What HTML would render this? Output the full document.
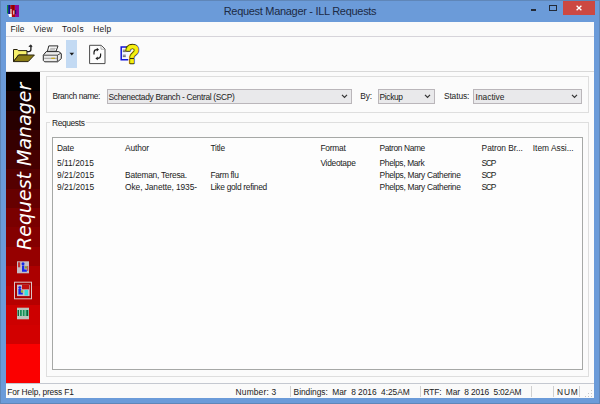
<!DOCTYPE html>
<html><head><meta charset="utf-8">
<title>Request Manager - ILL Requests</title>
<style>
*{box-sizing:border-box;margin:0;padding:0}
html,body{width:600px;height:404px;overflow:hidden;background:#6b9bd9}
body{position:relative;font-family:"Liberation Sans","DejaVu Sans",sans-serif;font-size:8.4px;color:#1a1a1a}
.abs{position:absolute}
#frame{left:0;top:0;width:600px;height:404px;border:1px solid #5f86b8}
#title{left:0;top:0;width:600px;height:22px;text-align:center;font-size:11px;line-height:22px;color:#1c2a44;letter-spacing:-0.3px}
#client{left:6px;top:22px;width:588px;height:376px;background:#fafafa}
#menubar{left:6px;top:22px;width:588px;height:15px;background:#fafafa;border-bottom:1px solid #d6d4da}
.mi{position:absolute;top:23px;height:13px;line-height:13px;white-space:nowrap}
#toolbar{left:6px;top:37px;width:588px;height:35px;background:#fbfbfb;border-bottom:1px solid #d8d8d8}
#side{left:6px;top:72px;width:34px;height:311px;background:linear-gradient(#030000 0.0px,#030000 19.44px,#160000 19.44px,#160000 38.88px,#280000 38.88px,#280000 58.31px,#360000 58.31px,#360000 77.75px,#460000 77.75px,#460000 97.19px,#550000 97.19px,#550000 116.62px,#660000 116.62px,#660000 136.06px,#7a0000 136.06px,#7a0000 155.5px,#840000 155.5px,#840000 174.94px,#960000 174.94px,#960000 194.38px,#ac0000 194.38px,#ac0000 213.81px,#b60000 213.81px,#b60000 233.25px,#cd0000 233.25px,#cd0000 252.69px,#d20000 252.69px,#d20000 272.12px,#fb0000 272.12px,#fb0000 291.56px,#fb0000 291.56px,#fb0000 311.0px)}
#sidetxt{left:0;top:0;color:#fff;font-family:"DejaVu Sans",sans-serif;font-style:italic;font-size:19px;letter-spacing:0;white-space:nowrap;transform-origin:0 0;transform:translate(7px,178px) rotate(-90deg);line-height:22px;height:22px}
#main{left:40px;top:72px;width:554px;height:311px;background:#fbfbfb}
.gb{border:1px solid #dedede}
.lbl{position:absolute;white-space:pre;line-height:11px;height:11px}
.combo{position:absolute;height:15px;border:1px solid #bab6ba;background:#e9e9eb;line-height:13px;padding-left:2px;white-space:nowrap}
.combo svg{position:absolute;right:2.7px;top:3.9px}
#status{left:6px;top:383px;width:588px;height:15px;background:#fafafa;border-top:1px solid #c4c8d0}
.sep{position:absolute;top:385.5px;width:1px;height:11px;background:#d0d0d0}
</style></head><body>
<div class="abs" id="frame"></div>
<div class="abs" id="title">Request Manager - ILL Requests</div>
<!-- app icon -->
<svg class="abs" style="left:7px;top:5px" width="12" height="12" viewBox="7 5 12 12">
<rect x="7" y="5" width="1.2" height="8.5" fill="#10903a"/>
<rect x="8.2" y="5" width="2.2" height="9" fill="#10108c"/>
<rect x="10.4" y="5" width="4.6" height="12" fill="#b00808"/>
<rect x="15" y="5" width="4" height="12" fill="#8a0a9a"/>
<rect x="12.6" y="5" width="1" height="5" fill="#6a0000"/>
<rect x="15" y="10" width="1.2" height="4" fill="#201070"/>
<rect x="10.4" y="9" width="1.2" height="5" fill="#e8dcd0"/>
<rect x="13.2" y="10.5" width="1.1" height="4" fill="#d8d8e8"/>
<path d="M8.2 14H11.8V17H9.2Z" fill="#fff"/>
</svg>
<!-- caption buttons -->
<div class="abs" style="left:530.8px;top:9.2px;width:5.4px;height:1.6px;background:#232a38"></div>
<div class="abs" style="left:549.3px;top:5.2px;width:7.5px;height:5.4px;border:0.9px solid #232a38;border-top-width:1.3px"></div>
<div class="abs" style="left:562.5px;top:1px;width:32.3px;height:13.8px;background:#cc4842"></div>
<svg class="abs" style="left:575.7px;top:5.2px" width="6" height="6" viewBox="0 0 6 6"><path d="M0.6 0.7L5.4 5.3M5.4 0.7L0.6 5.3" stroke="#fff" stroke-width="1.3" fill="none"/></svg>

<div class="abs" id="client"></div>
<div class="abs" id="menubar"></div>
<div class="abs" id="toolbar"></div>
<!-- toolbar icons -->
<div class="abs" style="left:66px;top:40px;width:11px;height:28px;background:#c3daf3"></div>
<svg class="abs" style="left:0;top:36px" width="160" height="36" viewBox="0 36 160 36">
<!-- open folder -->
<path d="M13.5 61.5V49.5H17.3L18.3 50.6H27V55H18.5Z" fill="#f6f06a" stroke="#2a2410" stroke-width="1"/>
<path d="M18.6 55H34.4L28.2 61.6H13.5Z" fill="#8a7c14" stroke="#2a2410" stroke-width="1"/>
<path d="M26.8 51.7H28.8Q30.9 51.7 30.9 49.6V46.4" fill="none" stroke="#1a1a1a" stroke-width="1.3"/>
<path d="M28.8 46.4L31 44.8L32.1 46.7Z" fill="#1a1a1a" stroke="#1a1a1a" stroke-width=".6"/>
<!-- printer -->
<path d="M48.8 45.9H58L56 51.3H47.4Z" fill="#fff" stroke="#2a2a2a" stroke-width="1"/>
<path d="M50.2 48.3H55.8M49.6 49.8H55" stroke="#8a8a8a" stroke-width=".7"/>
<path d="M46.2 51.6H58.8L61.3 53.6V58.6L57.6 61.8H44.6L43.3 60.4V55.2Z" fill="#ececec" stroke="#2a2a2a" stroke-width="1"/>
<path d="M43.6 55.2H57.4V61.5M57.4 55.2L61 53.2" fill="none" stroke="#3a3a3a" stroke-width=".9"/>
<path d="M44.2 58.3H57" stroke="#8a8a8a" stroke-width=".8"/>
<rect x="51.3" y="57.7" width="3.6" height="1.2" fill="#c8a818"/>
<!-- dropdown arrow -->
<path d="M69.5 52.8H74.1L71.8 55.4Z" fill="#1a1a1a"/>
<!-- refresh doc -->
<path d="M89.6 45.3H101.2L105 49V63.6H89.6Z" fill="#fdfdfd" stroke="#4a4a4a" stroke-width="1"/>
<path d="M101 45.5V49.2H104.8" fill="none" stroke="#9a9a9a" stroke-width=".8"/>
<path d="M94 54.6V52.4C94 50.4 95.2 49.6 97 49.6M100.6 53.4V55.6C100.6 57.6 99.4 58.4 97.6 58.4" fill="none" stroke="#1a1a1a" stroke-width="1.2"/>
<path d="M96.8 47.8L99 49.6L96.8 51.4ZM97.8 56.6L95.4 58.4L97.8 60.2Z" fill="#1a1a1a"/>
<!-- help -->
<path d="M128.2 46.9H121.2V59.7H128.2" fill="#f6f6ff" stroke="#1414d8" stroke-width="1.5"/>
<path d="M122.8 50.2H125.8M122.8 51.6H125.8M122.8 55.2H125.8M122.8 56.6H125.8" stroke="#444" stroke-width=".8"/>
<text transform="translate(125.6 63.2) scale(.9 1)" font-family="Liberation Sans, sans-serif" font-weight="bold" font-size="25" fill="#3a3000" stroke="#3a3000" stroke-width="2.4" stroke-linejoin="round">?</text>
<text transform="translate(125.6 63.2) scale(.9 1)" font-family="Liberation Sans, sans-serif" font-weight="bold" font-size="25" fill="#f6f010" stroke="#f6f010" stroke-width=".7" stroke-linejoin="round">?</text>
</svg>

<div class="abs" id="main"></div>
<div class="abs" id="side"><div class="abs" id="sidetxt">Request Manager</div></div>
<!-- side icons -->
<svg class="abs" style="left:6px;top:255px" width="34" height="70" viewBox="6 255 34 70">
<rect x="17" y="261.3" width="12" height="12" fill="#c4bcc4"/>
<rect x="18" y="262.3" width="2.2" height="5" fill="#c03030"/>
<circle cx="23" cy="263.7" r="1.5" fill="#1428e8"/>
<path d="M22 265.500H24.300V269.500H26.800V271.700H22Z" fill="#1428e8"/>
<rect x="24.8" y="266.2" width="2.2" height="2.4" fill="#8a9a30"/>
<rect x="27.2" y="266" width="1" height="5" fill="#c04040"/>
<rect x="14.5" y="282.2" width="17" height="16.6" fill="#a80000" stroke="#dcc4c4" stroke-width="1"/>
<rect x="17" y="284.7" width="12.6" height="11.4" fill="#c8c0c8"/>
<rect x="22" y="284.7" width="7" height="4.6" fill="#c01010"/>
<circle cx="19.8" cy="287.6" r="1.4" fill="#1428e8"/>
<path d="M18.4 289H21.200V292.500H22.800V294.600H18.400Z" fill="#1428e8"/>
<rect x="20.8" y="290.3" width="2.4" height="2.2" fill="#a0b030"/>
<path d="M24.5 290H28V295.500H24.500Z" fill="#30e0e0"/>
<rect x="17" y="307.7" width="12" height="11.6" fill="#bcc4bc"/>
<rect x="17.6" y="310" width="10.8" height="6" fill="#189058"/>
<path d="M19.5 310V316M22.3 310V316M25.1 310V316" stroke="#b8e0c8" stroke-width=".9"/>
<path d="M18.3 310V316M27.5 310V316" stroke="#105030" stroke-width=".8"/>
</svg>

<div class="abs gb" style="left:46px;top:76px;width:543px;height:37px"></div>
<div class="combo" style="left:107px;top:89px;width:245px"><svg width="7" height="5"><path d="M1 0.8L3.5 3.4L6 0.8" fill="none" stroke="#333" stroke-width="1.2"/></svg></div>
<div class="combo" style="left:378px;top:89px;width:57px"><svg width="7" height="5"><path d="M1 0.8L3.5 3.4L6 0.8" fill="none" stroke="#333" stroke-width="1.2"/></svg></div>
<div class="combo" style="left:473px;top:89px;width:109px"><svg width="7" height="5"><path d="M1 0.8L3.5 3.4L6 0.8" fill="none" stroke="#333" stroke-width="1.2"/></svg></div>

<div class="abs gb" style="left:46px;top:122px;width:543px;height:255px"></div>
<div class="abs" style="left:52px;top:137px;width:531px;height:233px;border:1px solid #a6a8a6;background:#fdfdfd"></div>





<div class="abs" id="status"></div>
<div class="lbl" style="left:10.6px;top:24.0px;letter-spacing:0.13px">File</div>
<div class="lbl" style="left:33.8px;top:24.0px;letter-spacing:0.23px">View</div>
<div class="lbl" style="left:62.0px;top:24.0px;letter-spacing:0.51px">Tools</div>
<div class="lbl" style="left:93.2px;top:24.0px;letter-spacing:0.26px">Help</div>
<div class="lbl" style="left:52.5px;top:91.0px;letter-spacing:-0.39px">Branch name:</div>
<div class="lbl" style="left:360.2px;top:91.0px;letter-spacing:-0.10px">By:</div>
<div class="lbl" style="left:443.9px;top:91.0px;letter-spacing:-0.10px">Status:</div>
<div class="lbl" style="left:108.5px;top:92.0px;letter-spacing:-0.32px">Schenectady Branch - Central (SCP)</div>
<div class="lbl" style="left:379.6px;top:92.0px;letter-spacing:-0.35px">Pickup</div>
<div class="lbl" style="left:475.6px;top:92.0px;letter-spacing:0.00px">Inactive</div>
<div class="lbl" style="left:52.1px;top:118.0px;letter-spacing:-0.38px;background:#fbfbfb;padding:0 2px;margin-left:-2px">Requests</div>
<div class="lbl" style="left:57.0px;top:143.0px;letter-spacing:-0.20px">Date</div>
<div class="lbl" style="left:125.1px;top:143.0px;letter-spacing:-0.14px">Author</div>
<div class="lbl" style="left:210.4px;top:143.0px;letter-spacing:-0.18px">Title</div>
<div class="lbl" style="left:320.4px;top:143.0px;letter-spacing:-0.23px">Format</div>
<div class="lbl" style="left:379.6px;top:143.0px;letter-spacing:-0.37px">Patron Name</div>
<div class="lbl" style="left:481.6px;top:143.0px;letter-spacing:-0.05px">Patron Br...</div>
<div class="lbl" style="left:532.8px;top:143.0px;letter-spacing:-0.01px">Item Assi...</div>
<div class="lbl" style="left:57.0px;top:158.0px;letter-spacing:0.03px">5/11/2015</div>
<div class="lbl" style="left:320.4px;top:158.0px;letter-spacing:-0.27px">Videotape</div>
<div class="lbl" style="left:379.6px;top:158.0px;letter-spacing:-0.34px">Phelps, Mark</div>
<div class="lbl" style="left:481.6px;top:158.0px;letter-spacing:-1.27px">SCP</div>
<div class="lbl" style="left:57.0px;top:170.0px;letter-spacing:-0.02px">9/21/2015</div>
<div class="lbl" style="left:125.1px;top:170.0px;letter-spacing:-0.23px">Bateman, Teresa.</div>
<div class="lbl" style="left:210.4px;top:170.0px;letter-spacing:-0.33px">Farm flu</div>
<div class="lbl" style="left:379.6px;top:170.0px;letter-spacing:-0.30px">Phelps, Mary Catherine</div>
<div class="lbl" style="left:481.6px;top:170.0px;letter-spacing:-1.27px">SCP</div>
<div class="lbl" style="left:57.0px;top:182.0px;letter-spacing:-0.02px">9/21/2015</div>
<div class="lbl" style="left:125.1px;top:182.0px;letter-spacing:-0.09px">Oke, Janette, 1935-</div>
<div class="lbl" style="left:210.4px;top:182.0px;letter-spacing:-0.29px">Like gold refined</div>
<div class="lbl" style="left:379.6px;top:182.0px;letter-spacing:-0.30px">Phelps, Mary Catherine</div>
<div class="lbl" style="left:481.6px;top:182.0px;letter-spacing:-1.27px">SCP</div>
<div class="lbl" style="left:7.3px;top:387.0px;letter-spacing:-0.16px">For Help, press F1</div>
<div class="lbl" style="left:235.6px;top:387.0px;letter-spacing:0.17px">Number: 3</div>
<div class="lbl" style="left:293.6px;top:387.0px;letter-spacing:-0.04px">Bindings:  Mar  8 2016  4:25AM</div>
<div class="lbl" style="left:423.6px;top:387.0px;letter-spacing:-0.14px">RTF:  Mar  8 2016  5:02AM</div>
<div class="lbl" style="left:557.1px;top:387.0px;letter-spacing:0.81px">NUM</div>
<div class="sep" style="left:290px"></div>
<div class="sep" style="left:420px"></div>
<div class="sep" style="left:531px"></div>
<div class="sep" style="left:553px"></div>
<div class="sep" style="left:579px"></div>
<svg class="abs" style="left:584px;top:389px" width="9" height="9" viewBox="0 0 9 9"><path d="M7 1H8V2H7ZM4 4H5V5H4ZM7 4H8V5H7ZM1 7H2V8H1ZM4 7H5V8H4ZM7 7H8V8H7Z" fill="#c4c4c4"/></svg>
</body></html>
